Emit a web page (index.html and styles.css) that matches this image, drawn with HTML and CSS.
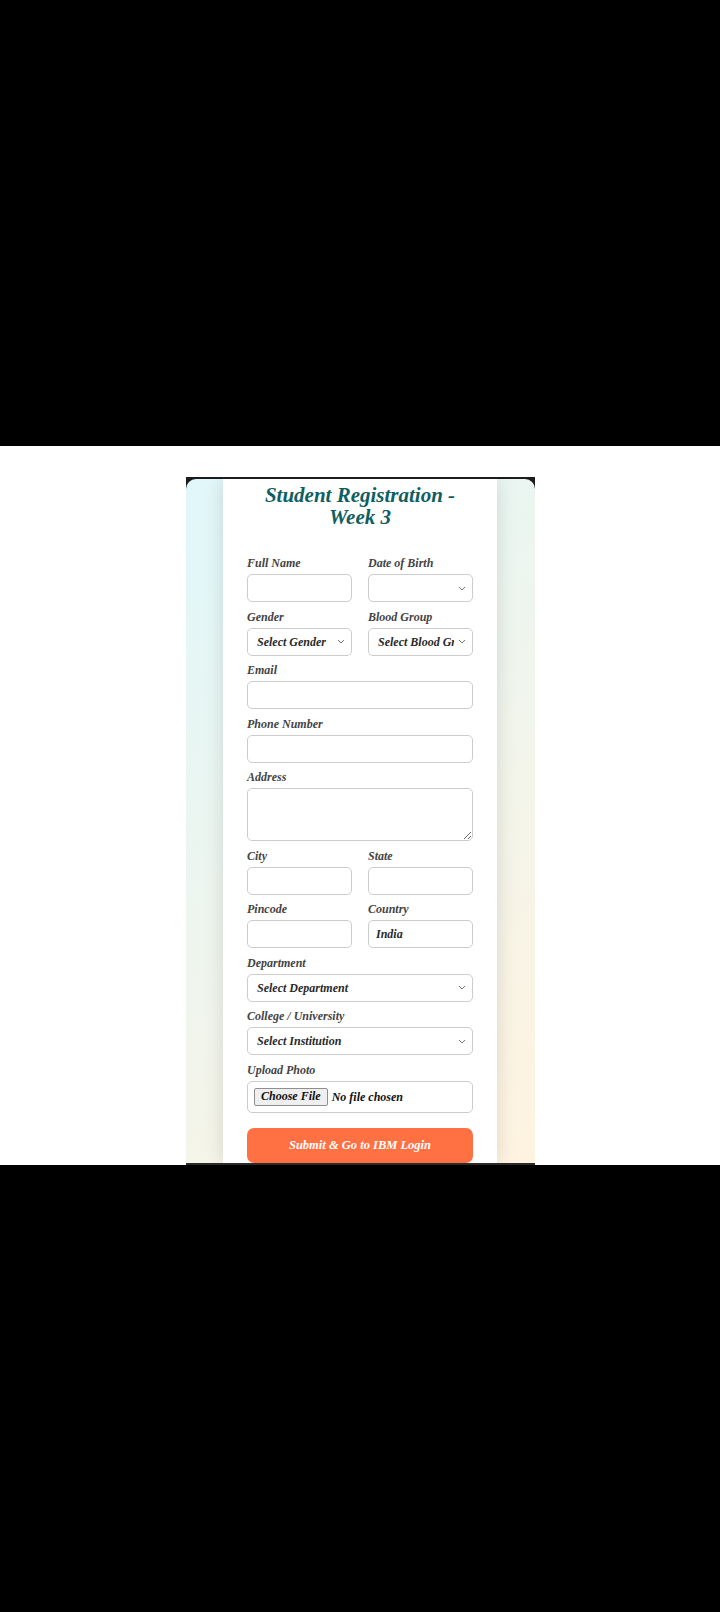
FILE: index.html
```html
<!DOCTYPE html>
<html lang="en">
<head>
    <meta charset="UTF-8">
    <meta name="viewport" content="width=device-width, initial-scale=1.0">
    <title>Student Registration - Week 3</title>
    <link rel="stylesheet" href="styles.css">
</head>
<body>
    <div class="bar-top"></div>

    <div class="band">
        <div class="phone">
            <div class="screen">
                <div class="card">
                    <h2>Student Registration - Week 3</h2>
                    <form class="form" onsubmit="return false;">
                        <div class="row">
                            <div class="field">
                                <label for="fullName">Full Name</label>
                                <input type="text" id="fullName">
                            </div>
                            <div class="field">
                                <label for="dob">Date of Birth</label>
                                <select id="dob"><option></option></select>
                            </div>
                        </div>
                        <div class="row">
                            <div class="field">
                                <label for="gender">Gender</label>
                                <select id="gender">
                                    <option>Select Gender</option>
                                    <option>Male</option>
                                    <option>Female</option>
                                </select>
                            </div>
                            <div class="field">
                                <label for="blood">Blood Group</label>
                                <select id="blood">
                                    <option>Select Blood Group</option>
                                    <option>A+</option>
                                    <option>B+</option>
                                    <option>O+</option>
                                </select>
                            </div>
                        </div>
                        <div class="field">
                            <label for="email">Email</label>
                            <input type="email" id="email">
                        </div>
                        <div class="field">
                            <label for="phone">Phone Number</label>
                            <input type="tel" id="phone">
                        </div>
                        <div class="field">
                            <label for="address">Address</label>
                            <textarea id="address"></textarea>
                        </div>
                        <div class="row">
                            <div class="field">
                                <label for="city">City</label>
                                <input type="text" id="city">
                            </div>
                            <div class="field">
                                <label for="state">State</label>
                                <input type="text" id="state">
                            </div>
                        </div>
                        <div class="row">
                            <div class="field">
                                <label for="pincode">Pincode</label>
                                <input type="text" id="pincode">
                            </div>
                            <div class="field">
                                <label for="country">Country</label>
                                <input type="text" id="country" value="India">
                            </div>
                        </div>
                        <div class="field">
                            <label for="dept">Department</label>
                            <select id="dept">
                                <option>Select Department</option>
                                <option>Computer Science</option>
                                <option>Electronics</option>
                            </select>
                        </div>
                        <div class="field">
                            <label for="college">College / University</label>
                            <select id="college">
                                <option>Select Institution</option>
                            </select>
                        </div>
                        <div class="field">
                            <label for="photo">Upload Photo</label>
                            <input type="file" id="photo">
                        </div>
                        <button type="submit" class="submit">Submit &amp; Go to IBM Login</button>
                    </form>
                </div>
            </div>
        </div>
    </div>

    <div class="bar-bottom"></div>
</body>
</html>
```

FILE: styles.css
```css
* {
    margin: 0;
    padding: 0;
    box-sizing: border-box;
}

body {
    background: #000000;
    font-family: 'Liberation Serif', 'DejaVu Serif', serif;
    font-weight: 700;
    font-style: italic;
    color: #222222;
}

.bar-top {
    height: 446px;
    background: #000000;
}

.band {
    height: 719px;
    background: #ffffff;
    display: flex;
    justify-content: center;
    padding-top: 31px;
}

/* Phone frame */
.phone {
    width: 349px;
    height: 688px;
    background: #1c1c1c;
    border-top: 2px solid #1c1c1c;
    border-bottom: 2px solid #2a2a2a;
}

.screen {
    height: 684px;
    overflow: hidden;
    border-radius: 10px 10px 0 0;
    background: linear-gradient(135deg, #e0f7fa, #fff3e0);
}

.card {
    width: 274px;
    min-height: 100%;
    margin: 0 auto;
    padding: 5px 24px 0;
    background: #ffffff;
    box-shadow: 0 0 18px rgba(0, 0, 0, 0.13);
}

.card h2 {
    font-size: 21px;
    line-height: 22px;
    color: #0f5e62;
    text-align: center;
    margin-bottom: 27px;
}

.row {
    display: grid;
    grid-template-columns: 1fr 1fr;
    gap: 16px;
}

.field {
    margin-bottom: 6.5px;
    min-width: 0;
}

.field label {
    display: block;
    font-size: 12px;
    line-height: 16px;
    margin-bottom: 3px;
    color: #444444;
}

.field input,
.field select,
.field textarea {
    display: block;
    width: 100%;
    height: 28px;
    padding: 0 7px;
    border: 1px solid #cccccc;
    border-radius: 5px;
    background-color: #ffffff;
    font: inherit;
    font-size: 12px;
    color: #2a2a2a;
    outline: none;
}

.field select {
    appearance: none;
    -webkit-appearance: none;
    padding: 0 18px 0 9px;
    background-image: url("data:image/svg+xml,%3Csvg xmlns='http://www.w3.org/2000/svg' width='8' height='5' viewBox='0 0 8 5'%3E%3Cpath d='M1 1l3 3 3-3' fill='none' stroke='%23777' stroke-width='1'/%3E%3C/svg%3E");
    background-repeat: no-repeat;
    background-position: right 6px center;
    background-size: 8px 5px;
}

.field textarea {
    height: 53px;
    padding: 6px 7px;
    resize: vertical;
}

.field input[type="file"] {
    height: 32px;
    padding: 6px;
    font-size: 12px;
    color: #111111;
}

.field input[type="file"]::file-selector-button {
    height: 18px;
    padding: 0 6px;
    margin-right: 4px;
    font: inherit;
    font-size: 12px;
    color: #111111;
    background: #efefef;
    border: 1px solid #8f8f8f;
    border-radius: 2px;
}

.submit {
    width: 100%;
    height: 35px;
    margin-top: 8.5px;
    background: #ff7043;
    border: none;
    border-radius: 7px;
    color: #ffffff;
    font: inherit;
    font-size: 12.5px;
    cursor: pointer;
}

.bar-bottom {
    height: 447px;
    background: #000000;
}
```
